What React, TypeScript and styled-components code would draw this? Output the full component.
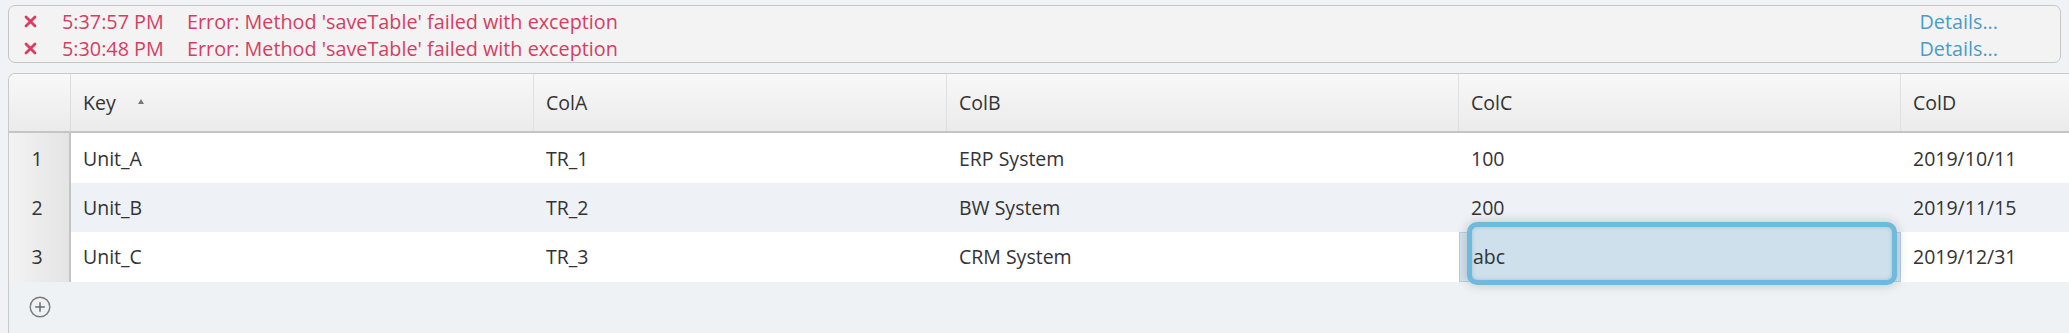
import React from "react";
import styled, { createGlobalStyle } from "styled-components";

const GlobalStyle = createGlobalStyle`
  html, body {
    margin: 0;
    padding: 0;
    overflow: hidden;
    background: #f0f2f5;
    font-family: "Open Sans", "Noto Sans", sans-serif;
    color: #333;
  }
`;

const Page = styled.div`
  display: flex;
  flex-direction: column;
  padding: 5px 0 0 8px;
  height: 333px;
  box-sizing: border-box;
`;

const MessageStrip = styled.div`
  margin-right: 8px;
  background: #f3f3f3;
  border: 1.5px solid #c6c6c6;
  border-radius: 7px;
  padding: 2px 0 0 0;
  display: flex;
  flex-direction: column;
`;

const MessageRow = styled.div`
  display: flex;
  align-items: center;
  height: 27px;
  font-size: 19.8px;
  color: #d63d62;
`;

const IconBox = styled.span`
  width: 53px;
  padding-left: 15px;
  box-sizing: border-box;
  display: flex;
  align-items: center;
`;

const Time = styled.span`
  width: 125px;
  flex: none;
`;

const MessageText = styled.span`
  flex: 1;
`;

const DetailsLink = styled.a`
  color: #4b9bca;
  padding-right: 62px;
  cursor: pointer;
`;

const TableFrame = styled.div`
  margin-top: 10px;
  flex: 1;
  width: 2300px;
  border: 1px solid #c9c9c9;
  border-right: none;
  border-bottom: none;
  border-top-left-radius: 7px;
  overflow: hidden;
  background: #eff2f5;
  display: flex;
  flex-direction: column;
`;

const COLS = "62px 463px 413px 512px 442px 408px";

const HeaderRow = styled.div`
  display: grid;
  grid-template-columns: ${COLS};
  height: 58px;
  background: linear-gradient(#f8f8f8, #ebebeb);
  border-bottom: 2px solid #c5c5c5;
`;

const HeaderCell = styled.div<{ $first?: boolean }>`
  display: flex;
  align-items: center;
  padding-left: 12px;
  font-size: 19.5px;
  color: #333;
  border-right: 1px solid ${(p) => (p.$first ? "#dcdcdc" : "#e0e0e0")};
  gap: 22px;
`;

const SortArrow = styled.span`
  width: 0;
  height: 0;
  border-left: 3.5px solid transparent;
  border-right: 3.5px solid transparent;
  border-bottom: 5px solid #777;
  margin-top: -2px;
`;

const DataRow = styled.div<{ $alt?: boolean }>`
  display: grid;
  grid-template-columns: ${COLS};
  height: 50px;
  background: ${(p) => (p.$alt ? "#eef2f6" : "#ffffff")};
`;

const RowNumber = styled.div`
  display: flex;
  align-items: center;
  justify-content: center;
  font-size: 19.5px;
  color: #333;
  background: linear-gradient(90deg, #f3f3f3, #e4e4e4);
  border-right: 2px solid #c4c4c4;
  padding-right: 4px;
`;

const Cell = styled.div`
  position: relative;
  display: flex;
  align-items: center;
  padding-left: 12px;
  font-size: 19.5px;
  color: #333;
`;

const EditingCell = styled(Cell)`
  background: #d3e3ee;
  border: 1px solid #b6d0e0;
  box-sizing: border-box;
`;

const EditorBox = styled.div`
  position: absolute;
  left: 7px;
  right: 3px;
  top: -11px;
  bottom: -4px;
  border: 5px solid #6dbadd;
  border-radius: 10px;
  background: #cde0ec;
  box-shadow: 0 0 12px rgba(0, 0, 0, 0.2), inset 0 0 4px rgba(0, 0, 0, 0.15);
  display: flex;
  align-items: center;
  padding-top: 7px;
  padding-left: 1px;
  box-sizing: border-box;
  font-size: 19.5px;
  color: #333;
  z-index: 2;
`;

const Footer = styled.div`
  display: flex;
  align-items: center;
  height: 52px;
  padding-left: 20px;
`;

const AddButton = styled.button`
  border: none;
  background: transparent;
  padding: 0;
  display: flex;
  cursor: pointer;
`;

const ErrorIcon = () => (
  <svg width="13" height="13" viewBox="0 0 13 13">
    <path d="M2 2 L11 11 M11 2 L2 11" stroke="#dc3a5f" strokeWidth="2.8" strokeLinecap="round" />
  </svg>
);

const AddIcon = () => (
  <svg width="22" height="22" viewBox="0 0 22 22">
    <circle cx="11" cy="11" r="9.8" fill="none" stroke="#7a7a7a" strokeWidth="1.4" />
    <path d="M11 6.2 V15.8 M6.2 11 H15.8" stroke="#6a6a6a" strokeWidth="1.5" />
  </svg>
);

const messages = [
  { time: "5:37:57 PM", text: "Error: Method 'saveTable' failed with exception" },
  { time: "5:30:48 PM", text: "Error: Method 'saveTable' failed with exception" },
];

const rows = [
  ["Unit_A", "TR_1", "ERP System", "100", "2019/10/11"],
  ["Unit_B", "TR_2", "BW System", "200", "2019/11/15"],
  ["Unit_C", "TR_3", "CRM System", "abc", "2019/12/31"],
];

export default function App() {
  return (
    <>
      <GlobalStyle />
      <Page>
        <MessageStrip>
          {messages.map((m, i) => (
            <MessageRow key={i}>
              <IconBox>
                <ErrorIcon />
              </IconBox>
              <Time>{m.time}</Time>
              <MessageText>{m.text}</MessageText>
              <DetailsLink>Details...</DetailsLink>
            </MessageRow>
          ))}
        </MessageStrip>
        <TableFrame>
          <HeaderRow>
            <HeaderCell $first />
            <HeaderCell>
              Key <SortArrow />
            </HeaderCell>
            <HeaderCell>ColA</HeaderCell>
            <HeaderCell>ColB</HeaderCell>
            <HeaderCell>ColC</HeaderCell>
            <HeaderCell>ColD</HeaderCell>
          </HeaderRow>
          {rows.map((r, i) => (
            <DataRow key={i} $alt={i === 1}>
              <RowNumber>{i + 1}</RowNumber>
              {r.map((v, j) =>
                i === 2 && j === 3 ? (
                  <EditingCell key={j}>
                    <EditorBox>{v}</EditorBox>
                  </EditingCell>
                ) : (
                  <Cell key={j}>{v}</Cell>
                )
              )}
            </DataRow>
          ))}
          <Footer>
            <AddButton aria-label="Add row">
              <AddIcon />
            </AddButton>
          </Footer>
        </TableFrame>
      </Page>
    </>
  );
}
